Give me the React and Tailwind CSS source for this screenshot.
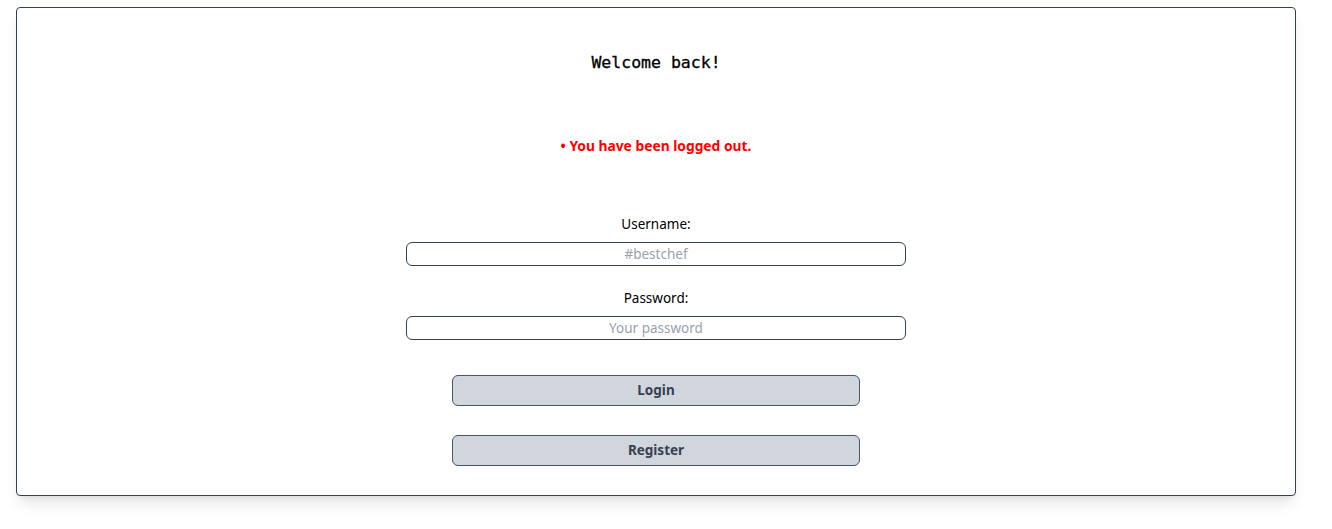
export default function App() {
  return (
    <div className="min-h-[529px] bg-white pt-[7px] pl-4 font-['Noto_Sans',sans-serif]">
      {/* CARD */}
      <div className="w-[1280px] rounded border border-slate-700 bg-white shadow-lg flex flex-col items-center pt-[43px] pb-[29px]">
        <h1 className="font-['DejaVu_Sans_Mono',monospace] text-[16.5px] leading-6 font-normal text-black [-webkit-text-stroke:0.3px_black]">
          Welcome back!
        </h1>

        <p className="mt-[61px] text-[13.8px] leading-5 font-bold text-[#ff0000]">
          • You have been logged out.
        </p>

        <form className="mt-[58px] flex flex-col items-center">
          <label className="text-[13.5px] leading-5 text-black">Username:</label>
          <input
            type="text"
            placeholder="#bestchef"
            className="mt-2 w-[500px] h-6 rounded-md border border-slate-700 text-center text-[13.5px] placeholder:text-gray-400 outline-none"
          />

          <label className="mt-[22px] text-[13.5px] leading-5 text-black">Password:</label>
          <input
            type="password"
            placeholder="Your password"
            className="mt-2 w-[500px] h-6 rounded-md border border-slate-700 text-center text-[13.5px] placeholder:text-gray-400 outline-none"
          />

          <button
            type="button"
            className="mt-[35px] w-[408px] h-[31px] rounded-md border border-slate-600 bg-gray-300 text-[13.5px] font-bold text-gray-700"
          >
            Login
          </button>
          <button
            type="button"
            className="mt-[29px] w-[408px] h-[31px] rounded-md border border-slate-600 bg-gray-300 text-[13.5px] font-bold text-gray-700"
          >
            Register
          </button>
        </form>
      </div>
    </div>
  );
}
